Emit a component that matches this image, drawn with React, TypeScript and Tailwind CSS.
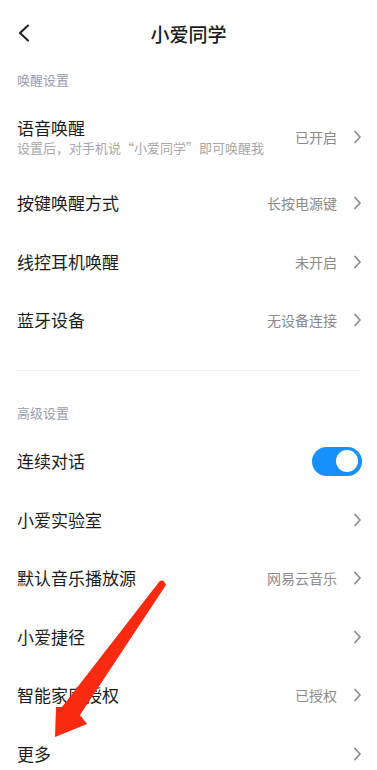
import React from "react";

interface RowItem {
  title: string;
  value?: string;
  toggle?: boolean;
}

const wakeRows: RowItem[] = [
  { title: "按键唤醒方式", value: "长按电源键" },
  { title: "线控耳机唤醒", value: "未开启" },
  { title: "蓝牙设备", value: "无设备连接" },
];

const advancedRows: RowItem[] = [
  { title: "连续对话", toggle: true },
  { title: "小爱实验室" },
  { title: "默认音乐播放源", value: "网易云音乐" },
  { title: "小爱捷径" },
  { title: "智能家庭授权", value: "已授权" },
  { title: "更多" },
];

function Chevron() {
  return (
    <svg width="9" height="14" viewBox="0 0 9 14" className="shrink-0">
      <polyline
        points="2,1.5 7,7 2,12.5"
        fill="none"
        stroke="#8e8e8e"
        strokeWidth="1.8"
        strokeLinecap="round"
        strokeLinejoin="round"
      />
    </svg>
  );
}

function Toggle() {
  return (
    <div className="w-[50px] h-[29px] rounded-full bg-[#1690fb] flex items-center justify-end pr-[4px]">
      <div className="w-[22px] h-[22px] rounded-full bg-white" />
    </div>
  );
}

function Row({ item }: { item: RowItem }) {
  return (
    <div className="h-[58.6px] flex items-center justify-between pl-[17px] pr-[15px]">
      <span className="text-[17px] leading-[24px] text-[#1c1c1c]">{item.title}</span>
      {item.toggle ? (
        <Toggle />
      ) : (
        <div className="flex items-center gap-[16px]">
          {item.value && (
            <span className="text-[14px] leading-[20px] text-[#8a8a8a]">{item.value}</span>
          )}
          <Chevron />
        </div>
      )}
    </div>
  );
}

export default function App() {
  return (
    <div
      className="relative w-[377px] h-[770px] overflow-hidden bg-white"
      style={{ fontFamily: '"Noto Sans CJK SC", "Noto Sans", sans-serif' }}
    >
      {/* 顶部栏 */}
      <header className="relative h-[68px] flex items-center justify-center">
        <button className="absolute left-[14px] top-[22px] w-[20px] h-[22px] flex items-center justify-center">
          <svg width="14" height="20" viewBox="0 0 14 20">
            <polyline
              points="11,2.5 3,10 11,17.5"
              fill="none"
              stroke="#222"
              strokeWidth="2.1"
              strokeLinecap="round"
              strokeLinejoin="round"
            />
          </svg>
        </button>
        <h1 className="text-[19px] leading-[26px] font-medium text-[#1a1a1a]">小爱同学</h1>
      </header>

      {/* 唤醒设置 */}
      <div className="h-[24px] pt-[3px] pl-[17px] text-[13px] leading-[18px] text-[#9a9cb0]">唤醒设置</div>

      <div className="h-[82px] pt-[8px] flex items-center justify-between pl-[17px] pr-[15px]">
        <div className="flex flex-col">
          <span className="text-[17px] leading-[22px] text-[#1c1c1c]">语音唤醒</span>
          <span className="text-[13px] leading-[18px] text-[#a8a8a8]">
            设置后，对手机说“小爱同学”即可唤醒我
          </span>
        </div>
        <div className="flex items-center gap-[16px]">
          <span className="text-[14px] leading-[20px] text-[#8a8a8a]">已开启</span>
          <Chevron />
        </div>
      </div>

      {wakeRows.map((r) => (
        <Row key={r.title} item={r} />
      ))}

      <div className="mt-[20px] mx-[17px] h-px bg-[#f0f0f0]" />

      {/* 高级设置 */}
      <div className="h-[61px] pt-[33px] pl-[17px] text-[13px] leading-[18px] text-[#9a9cb0]">高级设置</div>

      {advancedRows.map((r) => (
        <Row key={r.title} item={r} />
      ))}

      {/* 红色箭头标注 */}
      <svg
        className="absolute left-0 top-0 pointer-events-none"
        width="377"
        height="770"
        viewBox="0 0 377 770"
      >
        <path
          d="M159,582 Q163,578 166,585 L80,715 L87,724 L55,737 L56,707 L62,707 Z"
          fill="#fa2a10"
        />
      </svg>
    </div>
  );
}
